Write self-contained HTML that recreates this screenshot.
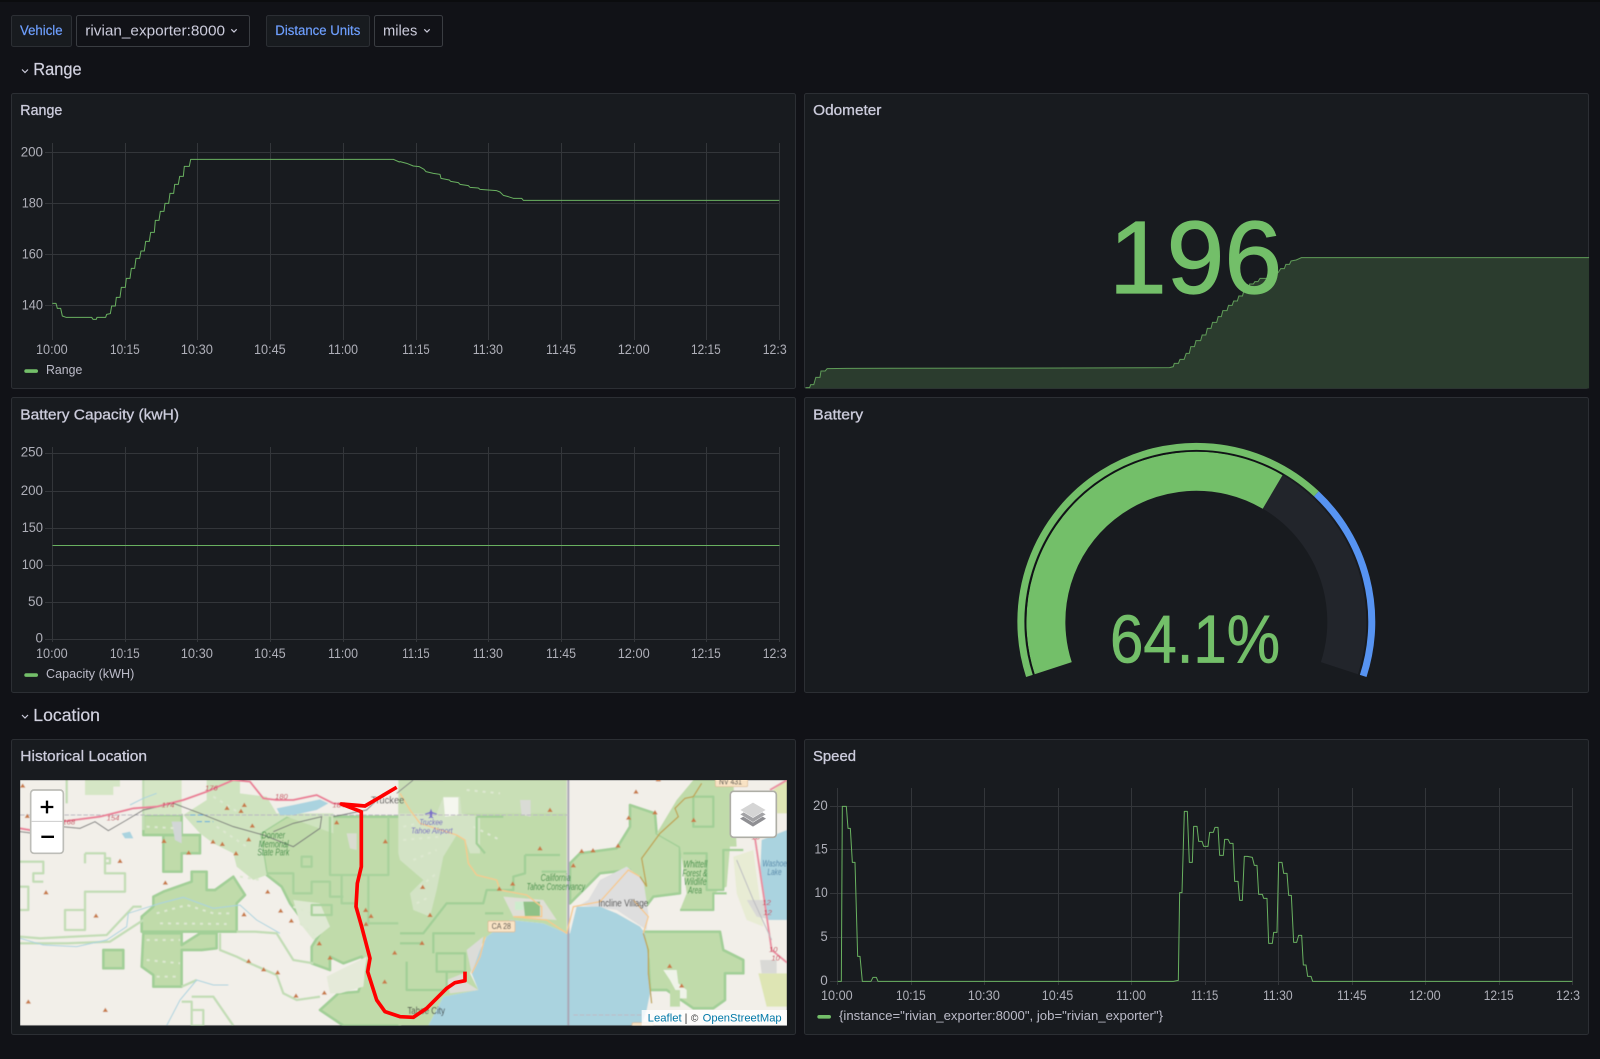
<!DOCTYPE html>
<html lang="en">
<head>
<meta charset="utf-8">
<title>Rivian Dashboard</title>
<style>
html,body{margin:0;padding:0;width:1600px;height:1059px;overflow:hidden;background:#111217}
svg{display:block}
text{font-family:"Liberation Sans",sans-serif}
.ax{font-size:13.5px;fill:#aeafb8}
.lg{font-size:13px;fill:#bcbcc9}
.ti{font-size:14.5px;fill:#ccccdc;stroke:#ccccdc;stroke-width:.3px}
.sec{font-size:17.5px;fill:#d2d2e0;stroke:#d2d2e0;stroke-width:.2px}
.var{font-size:13.5px;fill:#6e9fff;stroke:#6e9fff;stroke-width:.2px}
.val{font-size:15px;fill:#ccccdc}
.panel{fill:#181b1f;stroke:#2c2f34;stroke-width:1}
.grid{stroke:#33363a;stroke-width:1;fill:none}
.ser{stroke:#69b160;stroke-width:3;fill:none;stroke-linejoin:round}
.chev{stroke:#ccccdc;stroke-width:1.2;fill:none}
.gf{fill:#c0dbaa;stroke:#a2cf97;stroke-width:8;stroke-linejoin:round}
.gl{fill:none;stroke:#c3ddb6;stroke-width:7;stroke-linejoin:round}
.riv{fill:none;stroke:#a9d3df;stroke-width:3}
.gi{font-size:29px;font-style:italic;fill:#2f8a3d}
.num{font-size:23px;font-style:italic;fill:#c4304a}
.sp{fill:none;stroke:#dde8d0;stroke-width:6;stroke-dasharray:9 15}
</style>
</head>
<body>
<svg width="1600" height="1059" viewBox="0 0 1600 1059" xmlns="http://www.w3.org/2000/svg">
<defs>
<clipPath id="mapclip"><rect x="60" y="240" width="2301" height="737"/></clipPath>
<filter id="soft" x="0" y="0" width="100%" height="100%"><feGaussianBlur stdDeviation="1.6"/></filter>
</defs>
<rect width="1600" height="1059" fill="#111217"/>
<rect width="1600" height="2" fill="#0b0c0e"/>

<!-- variable bar -->
<rect x="11.5" y="15.5" width="60" height="31" rx="2" fill="#181b1f" stroke="#2c2f34"/>
<text class="var" x="20" y="35" textLength="42.6" lengthAdjust="spacingAndGlyphs">Vehicle</text>
<rect x="76.5" y="15.5" width="173" height="31" rx="2" fill="#111217" stroke="#3a3d42"/>
<text class="val" x="85.3" y="35.5" textLength="139.7" lengthAdjust="spacingAndGlyphs">rivian_exporter:8000</text>
<path class="chev" d="M231.3 29.3l2.7 2.7l2.7-2.7"/>
<rect x="266.5" y="15.5" width="103" height="31" rx="2" fill="#181b1f" stroke="#2c2f34"/>
<text class="var" x="275.3" y="35" textLength="85" lengthAdjust="spacingAndGlyphs">Distance Units</text>
<rect x="374.5" y="15.5" width="68" height="31" rx="2" fill="#111217" stroke="#3a3d42"/>
<text class="val" x="383" y="35.5" textLength="34.3" lengthAdjust="spacingAndGlyphs">miles</text>
<path class="chev" d="M424.3 29.3l2.7 2.7l2.7-2.7"/>

<!-- section rows -->
<path class="chev" d="M22 69.5l3 3l3-3"/>
<text class="sec" x="33.3" y="75" textLength="48.4" lengthAdjust="spacingAndGlyphs">Range</text>
<path class="chev" d="M22 715l3 3l3-3"/>
<text class="sec" x="33.3" y="721" textLength="66.7" lengthAdjust="spacingAndGlyphs">Location</text>

<!-- panels -->
<rect class="panel" x="11.5" y="93.5" width="784" height="295" rx="2"/>
<rect class="panel" x="804.5" y="93.5" width="784" height="295" rx="2"/>
<rect class="panel" x="11.5" y="397.5" width="784" height="295" rx="2"/>
<rect class="panel" x="804.5" y="397.5" width="784" height="295" rx="2"/>
<rect class="panel" x="11.5" y="739.5" width="784" height="295" rx="2"/>
<rect class="panel" x="804.5" y="739.5" width="784" height="295" rx="2"/>

<text class="ti" x="20.3" y="115" textLength="42" lengthAdjust="spacingAndGlyphs">Range</text>
<text class="ti" x="813.2" y="115" textLength="68.2" lengthAdjust="spacingAndGlyphs">Odometer</text>
<text class="ti" x="20.3" y="419.3" textLength="158.7" lengthAdjust="spacingAndGlyphs">Battery Capacity (kwH)</text>
<text class="ti" x="813.2" y="419.3" textLength="50" lengthAdjust="spacingAndGlyphs">Battery</text>
<text class="ti" x="20.3" y="761" textLength="126.7" lengthAdjust="spacingAndGlyphs">Historical Location</text>
<text class="ti" x="813" y="761" textLength="43" lengthAdjust="spacingAndGlyphs">Speed</text>

<!-- RANGE chart -->
<path class="grid" d="M52.5 143V340M125.5 143V340M197.5 143V340M270.5 143V340M343.5 143V340M416.5 143V340M488.5 143V340M561.5 143V340M634.5 143V340M706.5 143V340M779.5 143V340M45 152.5H779.5M45 203.5H779.5M45 254.5H779.5M45 305.5H779.5"/>
<g transform="scale(.33333)">
<polyline class="ser" points="157,910 168,910 172,925 182,925 187,948 198,952 275,952 279,958 289,958 291,952 317,952 320,943 331,941 335,918 346,918 349,892 360,892 364,862 376,862 379,835 390,835 394,805 404,805 408,775 419,775 423,753 433,753 437,724 448,724 452,697 463,697 466,661 477,661 481,634 492,634 495,610 506,610 510,580 521,580 524,553 535,553 539,529 550,529 553,499 568,499 572,478 1180,478 1198,486 1200,485 1220,490 1240,498 1258,500 1272,508 1278,515 1300,520 1320,523 1323,535 1348,540 1352,544 1375,548 1380,553 1405,557 1410,562 1435,564 1440,568 1490,572 1500,576 1510,586 1525,590 1540,595 1565,595 1570,601 2338,601"/>
</g>
<g class="ax">
<text x="20.7" y="156.7" textLength="22.3" lengthAdjust="spacingAndGlyphs">200</text>
<text x="21.7" y="207.3" textLength="21.3" lengthAdjust="spacingAndGlyphs">180</text>
<text x="21.7" y="258.3" textLength="21.3" lengthAdjust="spacingAndGlyphs">160</text>
<text x="21.7" y="309.3" textLength="21.3" lengthAdjust="spacingAndGlyphs">140</text>
<text x="36" y="354" textLength="31.7" lengthAdjust="spacingAndGlyphs">10:00</text>
<text x="110" y="354" textLength="29.7" lengthAdjust="spacingAndGlyphs">10:15</text>
<text x="180.7" y="354" textLength="32.3" lengthAdjust="spacingAndGlyphs">10:30</text>
<text x="254" y="354" textLength="31.7" lengthAdjust="spacingAndGlyphs">10:45</text>
<text x="328" y="354" textLength="30" lengthAdjust="spacingAndGlyphs">11:00</text>
<text x="402.3" y="354" textLength="27.4" lengthAdjust="spacingAndGlyphs">11:15</text>
<text x="472.7" y="354" textLength="30.3" lengthAdjust="spacingAndGlyphs">11:30</text>
<text x="546" y="354" textLength="30" lengthAdjust="spacingAndGlyphs">11:45</text>
<text x="617.7" y="354" textLength="32" lengthAdjust="spacingAndGlyphs">12:00</text>
<text x="691" y="354" textLength="29.7" lengthAdjust="spacingAndGlyphs">12:15</text>
<text x="762.7" y="354" textLength="24" lengthAdjust="spacingAndGlyphs">12:3</text>
</g>
<rect x="24.3" y="369.3" width="13.7" height="3.6" rx="1.8" fill="#73bf69"/>
<text class="lg" x="46" y="374" textLength="36.3" lengthAdjust="spacingAndGlyphs">Range</text>

<!-- CAPACITY chart -->
<path class="grid" d="M52.5 447V642M125.5 447V642M197.5 447V642M270.5 447V642M343.5 447V642M416.5 447V642M488.5 447V642M561.5 447V642M634.5 447V642M706.5 447V642M779.5 447V642M45 453.5H779.5M45 491.5H779.5M45 528.5H779.5M45 565.5H779.5M45 602.5H779.5M45 639.5H779.5"/>
<path d="M52.5 545.5H779.5" stroke="#69b160" stroke-width="1" fill="none"/>
<g class="ax">
<text x="20.7" y="456.7" textLength="22.3" lengthAdjust="spacingAndGlyphs">250</text>
<text x="20.7" y="495" textLength="22.3" lengthAdjust="spacingAndGlyphs">200</text>
<text x="21.7" y="532" textLength="21.3" lengthAdjust="spacingAndGlyphs">150</text>
<text x="21.7" y="569" textLength="21.3" lengthAdjust="spacingAndGlyphs">100</text>
<text x="28" y="606" textLength="15" lengthAdjust="spacingAndGlyphs">50</text>
<text x="35.5" y="642.7" textLength="7.5" lengthAdjust="spacingAndGlyphs">0</text>
<text x="36" y="658" textLength="31.7" lengthAdjust="spacingAndGlyphs">10:00</text>
<text x="110" y="658" textLength="29.7" lengthAdjust="spacingAndGlyphs">10:15</text>
<text x="180.7" y="658" textLength="32.3" lengthAdjust="spacingAndGlyphs">10:30</text>
<text x="254" y="658" textLength="31.7" lengthAdjust="spacingAndGlyphs">10:45</text>
<text x="328" y="658" textLength="30" lengthAdjust="spacingAndGlyphs">11:00</text>
<text x="402.3" y="658" textLength="27.4" lengthAdjust="spacingAndGlyphs">11:15</text>
<text x="472.7" y="658" textLength="30.3" lengthAdjust="spacingAndGlyphs">11:30</text>
<text x="546" y="658" textLength="30" lengthAdjust="spacingAndGlyphs">11:45</text>
<text x="617.7" y="658" textLength="32" lengthAdjust="spacingAndGlyphs">12:00</text>
<text x="691" y="658" textLength="29.7" lengthAdjust="spacingAndGlyphs">12:15</text>
<text x="762.7" y="658" textLength="24" lengthAdjust="spacingAndGlyphs">12:3</text>
</g>
<rect x="24.3" y="673.3" width="13.7" height="3.6" rx="1.8" fill="#73bf69"/>
<text class="lg" x="46" y="678" textLength="88.3" lengthAdjust="spacingAndGlyphs">Capacity (kWH)</text>

<!-- ODOMETER -->
<g transform="translate(790,80) scale(.51653,.33333)">
<path fill="#2b3c2e" d="M30 925V923H38L40 914H46L50 892H58L60 873H68L72 866L110 865L540 864L735 863L742 860L744 850H752L755 838H763L767 820H773L776 800H783L786 782H795L798 765H805L808 745H815L818 727H826L829 710H835L838 692H846L849 676H856L859 663H866L869 648H876L879 630H887L890 612H897L900 605H906L910 595H925L930 590L945 578L950 566H957L960 553H967L970 543L980 540L990 533H1547V925Z"/>
<path fill="none" stroke="#5f9c58" stroke-width="1" vector-effect="non-scaling-stroke" d="M30 923H38L40 914H46L50 892H58L60 873H68L72 866L110 865L540 864L735 863L742 860L744 850H752L755 838H763L767 820H773L776 800H783L786 782H795L798 765H805L808 745H815L818 727H826L829 710H835L838 692H846L849 676H856L859 663H866L869 648H876L879 630H887L890 612H897L900 605H906L910 595H925L930 590L945 578L950 566H957L960 553H967L970 543L980 540L990 533H1547"/>
</g>
<text x="1109" y="293" font-size="103" fill="#73bf69" stroke="#73bf69" stroke-width="1.2" textLength="173" lengthAdjust="spacingAndGlyphs">196</text>

<!-- GAUGE -->
<path d="M1053.2 668.2A150.5 150.5 0 1 1 1339.4 668.2" fill="none" stroke="#22252b" stroke-width="39"/>
<path d="M1053.2 668.2A150.5 150.5 0 0 1 1272.6 492" fill="none" stroke="#73bf69" stroke-width="39"/>
<path d="M1034 674.5A171 171 0 0 1 1283.5 474.6" fill="none" stroke="#101215" stroke-width="1.4"/>
<path d="M1029.4 675.9A175.5 175.5 0 0 1 1316.4 493.8" fill="none" stroke="#73bf69" stroke-width="7"/>
<path d="M1316.4 493.8A175.5 175.5 0 0 1 1363.2 675.9" fill="none" stroke="#5794f2" stroke-width="7"/>
<text x="1110" y="662.3" font-size="68" fill="#73bf69" stroke="#73bf69" stroke-width=".7" textLength="170" lengthAdjust="spacingAndGlyphs">64.1%</text>

<!-- MAP -->
<g transform="translate(0,700) scale(.33333)">
<g clip-path="url(#mapclip)">
<g filter="url(#soft)">
<rect x="60" y="240" width="2301" height="737" fill="#f2efe9"/>

<!-- left region woods -->
<path class="gf" d="M780 400L860 350H1200V977H1030L960 930L1015 880L1075 875L1100 800L1085 770L1030 790L990 770V810L935 790V740L960 700L900 650L870 610L845 560L800 525Z"/>
<path class="gf" d="M425 695H710V610L735 585L700 530L645 570H620V515H575V545L490 575L460 590V620L425 650Z"/>
<path class="gf" d="M425 800L430 700H545V735L600 700H650V745L605 750H545V860H460V825Z"/>
<path class="gf" d="M490 405H600V460H545V515H490Z"/>
<path class="gf" d="M430 345H545V405H430Z"/>
<path class="gf" d="M310 750H370V805H310Z"/>
<path fill="#d5e6c5" d="M255 240H360V260H340V285H255Z"/>
<path fill="#d5e6c5" d="M430 240H545V345H430Z"/>
<path fill="#cfe3bf" d="M620 240H720V280L800 290L830 340H1000V400L860 350L780 400L800 525L760 540L710 500L700 460L640 430L600 400L550 345L620 300Z"/>
<path fill="#dfe9d3" d="M880 600L960 610L990 680L940 720L900 670Z"/>
<path fill="#e5ead9" d="M980 830L1100 770L1090 860L1020 880L990 880Z"/>
<path fill="#d9dcd0" d="M1040 400L1070 400L1070 450L1050 445Z"/>
<path fill="#d2d6d6" d="M515 365H545V430L525 420Z"/>
<path class="sp" d="M470 640L560 615L640 640L700 640M480 670L680 672M440 720L540 720M440 780L540 790M470 830L530 830M640 290L720 340M650 380L740 440M880 620L960 650M900 670L950 710M720 530L780 540M440 380L530 385"/>
<path class="gl" style="stroke:#a8d29c" d="M990 350V525H1165V350M1105 525V670H1200M1025 525V610H1065M935 615H995V645H935ZM905 470H935V500H905ZM800 520H880V580H935V545H990V590H1030"/>
<path class="gl" d="M60 485H130V520H100V545H130M60 560H85V630H60M255 460H315V520H375V575H255V630H195V690H255V630M315 475H330V490H315ZM60 710L120 715L320 705L400 620L425 620M60 730L200 730L330 725L430 660"/>
<path class="gl" d="M660 700V750L710 770L750 790L830 825L850 880L890 900L960 890M710 695H765L830 700L880 780L940 790M575 890H640L700 977M575 930H610V977H575ZM545 905H575V930M545 860L590 840"/>
<path class="gl" d="M430 240V390M255 490V460M200 240V310"/>

<!-- right region -->
<g transform="translate(1200,180)">
<path fill="#c0dbaa" d="M-5 120H500V520L430 490L330 480L260 530L235 570L210 640L235 690L130 710L85 797H-5Z"/>
<path fill="#c9dfb6" d="M-5 60H500V160H-5Z"/>
<path fill="#d3e3c5" d="M-5 160H110L130 110H180L185 160L240 170V280L210 280L195 240L170 225L130 290L110 390L90 470L40 450L30 400L70 360L0 300L-5 280Z"/>
<path fill="#d9dbd5" d="M360 120H392V170L365 165Z"/>
<path fill="#f5f7ef" d="M130 112H175V165L135 170Z"/>
<path class="sp" d="M10 200L100 180M10 240L120 230M40 300L110 270M60 380L110 340M50 430L90 410M200 90L300 100M220 200L300 240"/>
<path fill="#dfdfd6" d="M310 410L430 420L470 480L340 470Z"/>
<path fill="#8fc186" d="M370 425H420V470H375Z"/>
<path fill="#cdeccd" d="M345 425H370V450H345Z"/>
<path fill="#dcdcd8" d="M200 570L250 530L235 610L215 640Z"/>
<path fill="#dddcd6" d="M140 660L190 640L195 665L235 690L150 700Z"/>
<path class="gl" style="stroke:#a2cf97" d="M230 170H310M230 170V250L255 280M375 285H480M375 285V340L340 350V390H260L250 430H140L70 520H0M425 335H500M20 605V690H140V635H110V580H195V635H110M225 520H100V580M255 460H310M0 550H70"/>

<path fill="#f2efe9" d="M510 60H700V135L690 200L650 265L540 280L520 200Z"/>
<path class="gf" d="M510 430V310L540 280L650 265L690 200V135L765 160L770 220L840 260V400L760 410L730 450L690 330L600 340L560 380Z"/>
<path fill="#c0dbaa" d="M770 220L830 120L880 60H1000L1010 260H990L980 380L940 400V450H840L860 400L840 260Z"/>
<path class="gl" style="stroke:#a2cf97" d="M850 280H920V390H970V270H1030M840 450H940V400H980M880 110H940V200H880Z"/>
<path class="gf" d="M730 515H960L970 570L1030 600V640H975V720L940 745H880L800 690H750L745 600Z"/>
<path fill="#e8ecd4" d="M1000 290L1060 270L1090 500L1040 480L1010 400Z"/>
<path fill="#dee5b4" d="M1075 640L1161 640V740H1100Z"/>
<path fill="#dee5b4" d="M1120 90L1161 60V160H1130Z"/>
<path fill="#eff3e8" d="M790 630H830L835 670L860 690V715H840L810 660Z"/>

<!-- towns -->
<path fill="#dedede" d="M565 420L600 360L680 320L730 360L745 460L740 510L650 450L540 435Z"/>
<path fill="#d9d9d6" d="M1040 420L1100 420L1120 480L1070 470Z"/>
<path fill="#d9d9d6" d="M1080 600H1130V640H1085Z"/>

<!-- lakes -->
<path fill="#aad3df" d="M510 520L530 440L600 440L650 460L720 500L735 520L745 600L750 700L740 750L725 797H85L130 710L235 690L215 640L240 570L260 530L330 480L430 490L500 520Z"/>
<path fill="#aad3df" d="M1085 240L1161 210V480H1105L1080 350Z"/>
<path fill="#c0dbaa" d="M810 690H840V740H810Z"/>

<!-- state line -->
<path d="M505 60V797" stroke="#aaa6b6" stroke-width="6" fill="none"/>
<path d="M0 165H505M520 765H725" stroke="#bdb8c2" stroke-width="3" fill="none" stroke-dasharray="14 5"/>

<!-- roads -->
<path fill="none" stroke="#f6c98c" stroke-width="4" d="M0 100L30 150L60 190L170 225L195 240L205 310L230 345L290 360L300 390L380 405L425 440L425 470L340 470L440 480L500 520L520 440L600 425L685 330L720 350M255 530L240 590L215 640M730 520L745 470L700 420"/>
<path fill="none" stroke="#bfa552" stroke-width="4" d="M740 380L725 295L780 220L835 170L825 145L855 115L880 110L905 70M740 380L720 350M730 520L745 570L745 640L755 730"/>
<path fill="none" stroke="#ea8fa2" stroke-width="6" d="M1065 235L1090 400L1115 570L1161 608M1110 90L1161 60"/>
<path fill="none" stroke="#bdbdc2" stroke-width="3" d="M1010 300L1060 420L1115 540"/>
<path fill="none" stroke="#888" stroke-width="3" d="M-10 100L40 60L130 60"/>

<!-- peaks -->
<path fill="#c87c49" d="M450 143l8 13h-16zM420 258l8 13h-16zM68 374l8 13h-16zM90 458l8 13h-16zM66 542l8 13h-16zM298 379l8 13h-16zM338 364l8 13h-16zM545 266l8 13h-16zM579 264l8 13h-16zM654 250l8 13h-16zM520 309l8 13h-16zM686 166l8 13h-16zM765 150l8 13h-16zM708 88l8 13h-16zM881 173l8 13h-16zM809 611l8 13h-16zM845 670l8 13h-16zM775 51l8 13h-16z"/>

<!-- labels -->
<path fill="#7a6fc8" d="M93 146l4 10l14 5v3l-14-3l-1 8l4 4v2l-7-2l-7 2v-2l4-4l-1-8l-14 3v-3l14-5z"/>
<text x="58" y="195" font-size="26" font-style="italic" fill="#6e5cc0" textLength="70" lengthAdjust="spacingAndGlyphs">Truckee</text>
<text x="33" y="220" font-size="26" font-style="italic" fill="#6e5cc0" textLength="125" lengthAdjust="spacingAndGlyphs">Tahoe Airport</text>
<text class="gi" x="422" y="363" textLength="90" lengthAdjust="spacingAndGlyphs">California</text>
<text class="gi" x="380" y="390" textLength="175" lengthAdjust="spacingAndGlyphs">Tahoe Conservancy</text>
<text x="595" y="440" font-size="31" fill="#333" textLength="150" lengthAdjust="spacingAndGlyphs">Incline Village</text>
<rect x="264" y="483" width="81" height="33" rx="4" fill="#f9e3c5" stroke="#d8b890" stroke-width="2"/>
<text x="275" y="507" font-size="25" fill="#333" textLength="58" lengthAdjust="spacingAndGlyphs">CA 28</text>
<rect x="946" y="50" width="97" height="30" rx="4" fill="#f9e3c5" stroke="#d8b890" stroke-width="2"/>
<text x="957" y="73" font-size="25" fill="#333" textLength="69" lengthAdjust="spacingAndGlyphs">NV 431</text>
<rect x="696" y="788" width="64" height="24" rx="4" fill="#f9e3c5" stroke="#d8b890" stroke-width="2"/>
<text class="gi" x="850" y="322" textLength="72" lengthAdjust="spacingAndGlyphs">Whittell</text>
<text class="gi" x="847" y="350" textLength="75" lengthAdjust="spacingAndGlyphs">Forest &amp;</text>
<text class="gi" x="852" y="375" textLength="68" lengthAdjust="spacingAndGlyphs">Wildlife</text>
<text class="gi" x="864" y="401" textLength="42" lengthAdjust="spacingAndGlyphs">Area</text>
<text x="1087" y="320" font-size="27" font-style="italic" fill="#4f84a8" textLength="74" lengthAdjust="spacingAndGlyphs">Washoe</text>
<text x="1102" y="345" font-size="27" font-style="italic" fill="#4f84a8" textLength="43" lengthAdjust="spacingAndGlyphs">Lake</text>
<text class="num" x="1087" y="435">12</text>
<text class="num" x="1090" y="465">12</text>
<text class="num" x="1107" y="576">10</text>
<text class="num" x="1114" y="602">10</text>
<text class="num" x="1054" y="238">16</text>
<text x="22" y="762" font-size="30" fill="#333" textLength="113" lengthAdjust="spacingAndGlyphs">Tahoe City</text>
</g>

<!-- left rivers/roads over green -->
<path class="riv" d="M60 715L130 735L230 740L320 720L380 680L385 640L480 610L550 592L640 625L720 615L770 660L840 700M500 977L540 900L590 840L640 855L685 855M390 315L430 295L470 280"/>
<path fill="#a9d3df" d="M365 400L390 395L400 415L375 415Z"/>
<path fill="none" stroke="#b8b4c0" stroke-width="3" stroke-dasharray="14 5" d="M60 345H1200"/>
<path fill="#aad3df" d="M830 325L880 315L960 298L985 310L950 330L880 345L840 345Z"/>
<path fill="none" stroke="#55a9dd" stroke-width="3" stroke-dasharray="16 8" d="M570 345H620M590 365H640"/>
<path fill="none" stroke="#777" stroke-width="3" d="M60 395L100 400L185 380L240 385L285 365L325 392L380 360L430 330L520 310L600 340L700 380L790 405L880 440L960 385L965 350L880 370L820 395M1000 350L1100 330L1130 300"/>
<path fill="none" stroke="#ea7f97" stroke-width="6" d="M60 385L100 392L185 365L300 350L400 325L470 320L550 300L620 275L700 240L750 245L790 295L830 300L880 300L950 285L1000 310L1024 312"/>
<text class="num" x="615" y="272">176</text>
<text class="num" x="485" y="323">174</text>
<text class="num" x="320" y="362">154</text>
<text class="num" x="187" y="373">168</text>
<text class="num" x="825" y="297">180</text>
<text class="num" x="997" y="323">184</text>
<text class="gi" x="785" y="416" textLength="70" lengthAdjust="spacingAndGlyphs">Donner</text>
<text class="gi" x="776" y="442" textLength="90" lengthAdjust="spacingAndGlyphs">Memorial</text>
<text class="gi" x="772" y="467" textLength="96" lengthAdjust="spacingAndGlyphs">State Park</text>
<text x="1113" y="310" font-size="31" fill="#444" textLength="100" lengthAdjust="spacingAndGlyphs">Truckee</text>
<path fill="#c87c49" d="M68 250l8 13h-16zM82 341l8 13h-16zM138 570l8 13h-16zM85 898l8 13h-16zM316 923l8 13h-16zM288 640l8 13h-16zM360 476l8 13h-16zM496 541l8 13h-16zM566 451l8 13h-16zM492 416l8 13h-16zM639 418l8 13h-16zM667 425l8 13h-16zM708 453l8 13h-16zM746 411l8 13h-16zM757 370l8 13h-16zM681 317l8 13h-16zM733 308l8 13h-16zM723 326l8 13h-16zM803 568l8 13h-16zM842 625l8 13h-16zM874 655l8 13h-16zM732 636l8 13h-16zM958 723l8 13h-16zM990 766l8 13h-16zM746 776l8 13h-16zM791 801l8 13h-16zM833 810l8 13h-16zM888 880l8 13h-16zM973 871l8 13h-16zM1097 623l8 13h-16zM1113 641l8 13h-16zM1098 665l8 13h-16zM1184 751l8 13h-16zM1154 838l8 13h-16zM1156 417l8 13h-16zM1010 360l8 13h-16z"/>
</g>

<!-- track -->
<path d="M1190 262L1095 318L1024 312L1084 335V500L1072 550L1068 620L1085 680L1110 775L1103 815L1130 900L1155 935L1200 950L1240 952L1280 925L1340 865L1365 848L1395 842V815" fill="none" stroke="#ff0000" stroke-width="11" stroke-linejoin="round"/>

<!-- zoom control -->
<rect x="92" y="270" width="98" height="190" rx="10" fill="#fff" stroke="#bdbdb8" stroke-width="5"/>
<path d="M95 364H187" stroke="#ccc" stroke-width="3"/>
<path d="M122 317.5h38v7h-38zM137.5 302h7v38h-7zM124 407h38v7h-38z" fill="#000"/>

<!-- layers control -->
<g transform="translate(1200,180)">
<rect x="991" y="94" width="138" height="138" rx="10" fill="#fff" stroke="#aeaea6" stroke-width="5"/>
<path d="M1059 153L1098 176L1059 200L1020 176Z" fill="#8f8f93"/>
<path d="M1059 140L1098 163L1059 187L1020 163Z" fill="#a3a3a6" stroke="#fff" stroke-width="1.5"/>
<path d="M1059 127L1098 150L1059 173L1020 150Z" fill="#d5d5d5" stroke="#fff" stroke-width="1.5"/>
<!-- attribution -->
<rect x="725" y="750" width="436" height="47" fill="#fff" fill-opacity=".8"/>
<text x="743" y="785" font-size="32" fill="#0078a8" textLength="102" lengthAdjust="spacingAndGlyphs">Leaflet</text>
<text x="854" y="785" font-size="32" fill="#333">|</text>
<text x="873" y="785" font-size="30" fill="#333">©</text>
<text x="908" y="785" font-size="32" fill="#0078a8" textLength="237" lengthAdjust="spacingAndGlyphs">OpenStreetMap</text>
</g>
</g>
</g>

<!-- SPEED chart -->
<path class="grid" d="M837.5 788V985M911.5 788V985M984.5 788V985M1058.5 788V985M1131.5 788V985M1205.5 788V985M1278.5 788V985M1352.5 788V985M1425.5 788V985M1499.5 788V985M1572.5 788V985M830 806.5H1572.5M830 849.5H1572.5M830 893.5H1572.5M830 937.5H1572.5M830 981.5H1572.5"/>
<g transform="translate(800,740) scale(.33333)">
<polyline class="ser" points="113,724 124,724 127,199 139,199 144,265 151,265 157,367 165,367 173,649 180,649 187,724 213,724 219,712 229,712 234,724 1120,724 1135,721 1139,458 1146,458 1153,214 1162,214 1168,367 1177,367 1181,259 1191,259 1196,304 1206,304 1211,319 1224,319 1229,277 1240,277 1245,262 1254,262 1259,346 1270,346 1274,298 1284,298 1290,310 1299,310 1304,424 1314,424 1319,481 1327,481 1333,349 1342,349 1357,352 1363,376 1371,376 1376,463 1387,463 1391,475 1401,475 1406,610 1417,610 1421,577 1431,577 1436,367 1446,367 1451,400 1461,400 1466,466 1474,466 1481,607 1490,607 1496,586 1505,586 1510,675 1518,675 1523,709 1533,709 1538,724 2317,724"/>
</g>
<g class="ax">
<text x="813" y="810" textLength="14.7" lengthAdjust="spacingAndGlyphs">20</text>
<text x="814.5" y="853.5" textLength="13.2" lengthAdjust="spacingAndGlyphs">15</text>
<text x="814.5" y="897" textLength="13.2" lengthAdjust="spacingAndGlyphs">10</text>
<text x="820.5" y="941" textLength="7.2" lengthAdjust="spacingAndGlyphs">5</text>
<text x="820.2" y="985" textLength="7.5" lengthAdjust="spacingAndGlyphs">0</text>
<text x="821" y="1000" textLength="31.7" lengthAdjust="spacingAndGlyphs">10:00</text>
<text x="896" y="1000" textLength="29.7" lengthAdjust="spacingAndGlyphs">10:15</text>
<text x="967.7" y="1000" textLength="32.3" lengthAdjust="spacingAndGlyphs">10:30</text>
<text x="1041.7" y="1000" textLength="31.6" lengthAdjust="spacingAndGlyphs">10:45</text>
<text x="1116" y="1000" textLength="30" lengthAdjust="spacingAndGlyphs">11:00</text>
<text x="1191" y="1000" textLength="27.3" lengthAdjust="spacingAndGlyphs">11:15</text>
<text x="1263" y="1000" textLength="29.7" lengthAdjust="spacingAndGlyphs">11:30</text>
<text x="1337" y="1000" textLength="29.7" lengthAdjust="spacingAndGlyphs">11:45</text>
<text x="1409" y="1000" textLength="31.7" lengthAdjust="spacingAndGlyphs">12:00</text>
<text x="1483.7" y="1000" textLength="30" lengthAdjust="spacingAndGlyphs">12:15</text>
<text x="1556" y="1000" textLength="24" lengthAdjust="spacingAndGlyphs">12:3</text>
</g>
<rect x="817.3" y="1015" width="13.7" height="3.6" rx="1.8" fill="#73bf69"/>
<text class="lg" x="839" y="1020" textLength="324" lengthAdjust="spacingAndGlyphs">{instance="rivian_exporter:8000", job="rivian_exporter"}</text>
</svg>
</body>
</html>
